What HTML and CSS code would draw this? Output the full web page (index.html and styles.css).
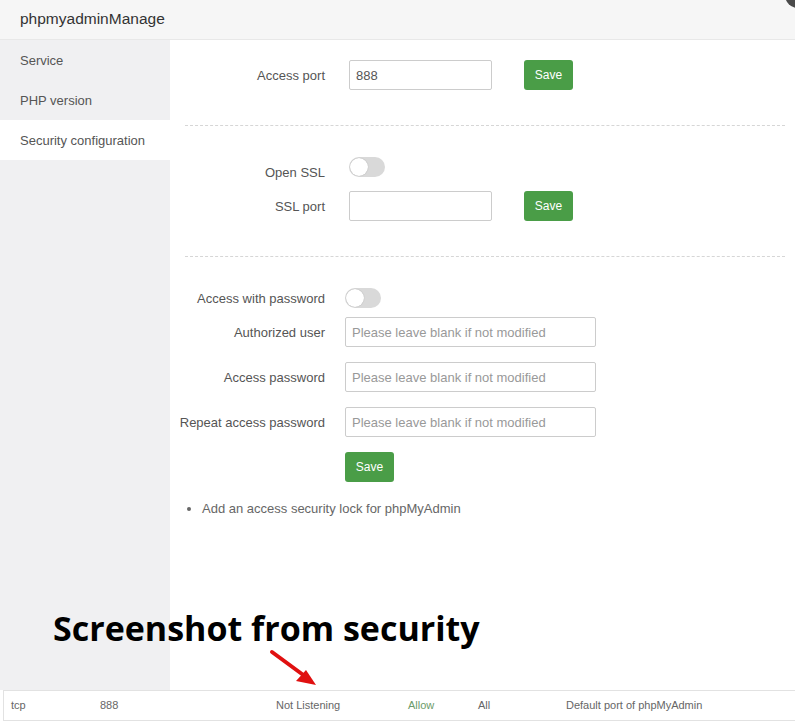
FILE: index.html
```html
<!DOCTYPE html>
<html>
<head>
<meta charset="utf-8">
<link rel="stylesheet" href="styles.css">
</head>
<body>
<div class="layer">
  <div class="header">phpmyadminManage</div>
  <span class="close"></span>
  <div class="main">
    <div class="sidebar">
      <div class="nav-item">Service</div>
      <div class="nav-item">PHP version</div>
      <div class="nav-item active">Security configuration</div>
    </div>
    <div class="content">
      <div class="section first">
        <div class="row">
          <label class="label">Access port</label>
          <input class="input short" type="text" value="888">
          <button class="btn">Save</button>
        </div>
      </div>
      <div class="divider"></div>
      <div class="section">
        <div class="row toggle-row">
          <label class="label low">Open SSL</label>
          <span class="toggle"><span class="knob"></span></span>
        </div>
        <div class="row spaced-sm">
          <label class="label">SSL port</label>
          <input class="input short" type="text">
          <button class="btn">Save</button>
        </div>
      </div>
      <div class="divider"></div>
      <div class="section">
        <div class="row toggle-row">
          <label class="label">Access with password</label>
          <span class="toggle narrow"><span class="knob"></span></span>
        </div>
        <div class="row gap9">
          <label class="label">Authorized user</label>
          <input class="input long" type="text" placeholder="Please leave blank if not modified">
        </div>
        <div class="row gap15">
          <label class="label">Access password</label>
          <input class="input long" type="password" placeholder="Please leave blank if not modified">
        </div>
        <div class="row gap15">
          <label class="label">Repeat access password</label>
          <input class="input long" type="password" placeholder="Please leave blank if not modified">
        </div>
        <div class="row gap15">
          <span class="label"></span>
          <button class="btn btn-left">Save</button>
        </div>
        <ul class="tips">
          <li>Add an access security lock for phpMyAdmin</li>
        </ul>
      </div>
    </div>
  </div>
  <div class="table-row">
    <span class="c1">tcp</span>
    <span class="c2">888</span>
    <span class="c3">Not Listening</span>
    <span class="c4">Allow</span>
    <span class="c5">All</span>
    <span class="c6">Default port of phpMyAdmin</span>
  </div>
  <div class="annotation">Screenshot from security</div>
  <svg class="arrow" width="60" height="45" viewBox="0 0 60 45">
    <line x1="4" y1="4" x2="38" y2="29" stroke="#e01010" stroke-width="4" stroke-linecap="round"/>
    <polygon points="48,37 28,33 38,22" fill="#e01010"/>
  </svg>
</div>
</body>
</html>
```

FILE: styles.css
```css
* { box-sizing: border-box; }
html, body { margin: 0; padding: 0; }
body {
  width: 795px;
  height: 721px;
  overflow: hidden;
  background: #fff;
  font-family: "Liberation Sans", Arial, sans-serif;
  font-size: 13px;
  color: #555;
}
.layer {
  position: relative;
  width: 795px;
  height: 721px;
  display: flex;
  flex-direction: column;
}
.header {
  height: 40px;
  flex: none;
  background: #f6f6f6;
  border-bottom: 1px solid #e8e8e8;
  padding-left: 20px;
  line-height: 38px;
  font-size: 15.5px;
  color: #333;
}
.close {
  position: absolute;
  right: -16px;
  top: -18px;
  width: 26px;
  height: 26px;
  border-radius: 50%;
  background: #4a4a4a;
}
.main {
  display: flex;
  height: 650px;
  flex: none;
}
.sidebar {
  width: 170px;
  flex: none;
  background: #f0f0f2;
}
.nav-item {
  height: 40px;
  line-height: 41px;
  padding-left: 20px;
  font-size: 13px;
  color: #555;
}
.nav-item.active {
  background: #fff;
}
.content {
  flex: 1;
  padding: 20px 10px 0 15px;
}
.row {
  display: flex;
  align-items: center;
}
.label {
  width: 140px;
  flex: none;
  display: flex;
  justify-content: flex-end;
  white-space: nowrap;
  color: #555;
  font-size: 13px;
  line-height: 20px;
  padding-top: 1px;
}
.toggle-row {
  align-items: flex-start;
  height: 20px;
}
.label.low { margin-top: 5px; }
.input {
  height: 30px;
  border: 1px solid #ccc;
  border-radius: 2px;
  padding: 0 6px;
  font-family: "Liberation Sans", Arial, sans-serif;
  font-size: 13px;
  color: #555;
  outline: none;
}
.input::placeholder { color: #999; }
.input.short {
  width: 143px;
  margin-left: 24px;
}
.input.long {
  width: 251px;
  margin-left: 20px;
}
.btn {
  height: 30px;
  width: 49px;
  margin-left: 32px;
  border: none;
  border-radius: 3px;
  background: #4a9d47;
  color: #fff;
  font-family: "Liberation Sans", Arial, sans-serif;
  font-size: 12px;
  padding: 0;
}
.btn.btn-left { margin-left: 20px; }
.toggle {
  position: relative;
  width: 36px;
  height: 20px;
  margin-left: 24px;
  border-radius: 10px;
  background: #d9d9d9;
  display: block;
}
.toggle.narrow { margin-left: 20px; }
.knob {
  position: absolute;
  left: 1px;
  top: 1px;
  width: 18px;
  height: 18px;
  border-radius: 50%;
  background: #fff;
  box-shadow: 0 0 1px rgba(0,0,0,0.3);
}
.divider {
  margin-top: 35px;
  border-top: 1px dashed #d6d6d6;
  height: 32px;
}
.spaced-sm { margin-top: 14px; }
.gap9 { margin-top: 9px; }
.gap15 { margin-top: 15px; }
.tips {
  margin: 17px 0 0 0;
  padding: 0 0 0 17px;
  color: #666;
  font-size: 13px;
  line-height: 20px;
}
.tips li { list-style: disc; }
.table-row {
  height: 31px;
  margin-left: 3px;
  border: 1px solid #e2e2e2;
  border-right: none;
  display: flex;
  align-items: center;
  font-size: 11px;
  color: #666;
  position: relative;
}
.table-row span { position: absolute; top: 8px; }
.c1 { left: 7px; }
.c2 { left: 96px; }
.c3 { left: 272px; }
.c4 { left: 404px; color: #6c9b6a; }
.c5 { left: 474px; }
.c6 { left: 562px; }
.annotation {
  position: absolute;
  left: 53px;
  top: 606px;
  font-family: "Open Sans", sans-serif;
  font-weight: 700;
  font-size: 34px;
  line-height: 44px;
  color: #000;
}
.arrow {
  position: absolute;
  left: 268px;
  top: 648px;
}
```
